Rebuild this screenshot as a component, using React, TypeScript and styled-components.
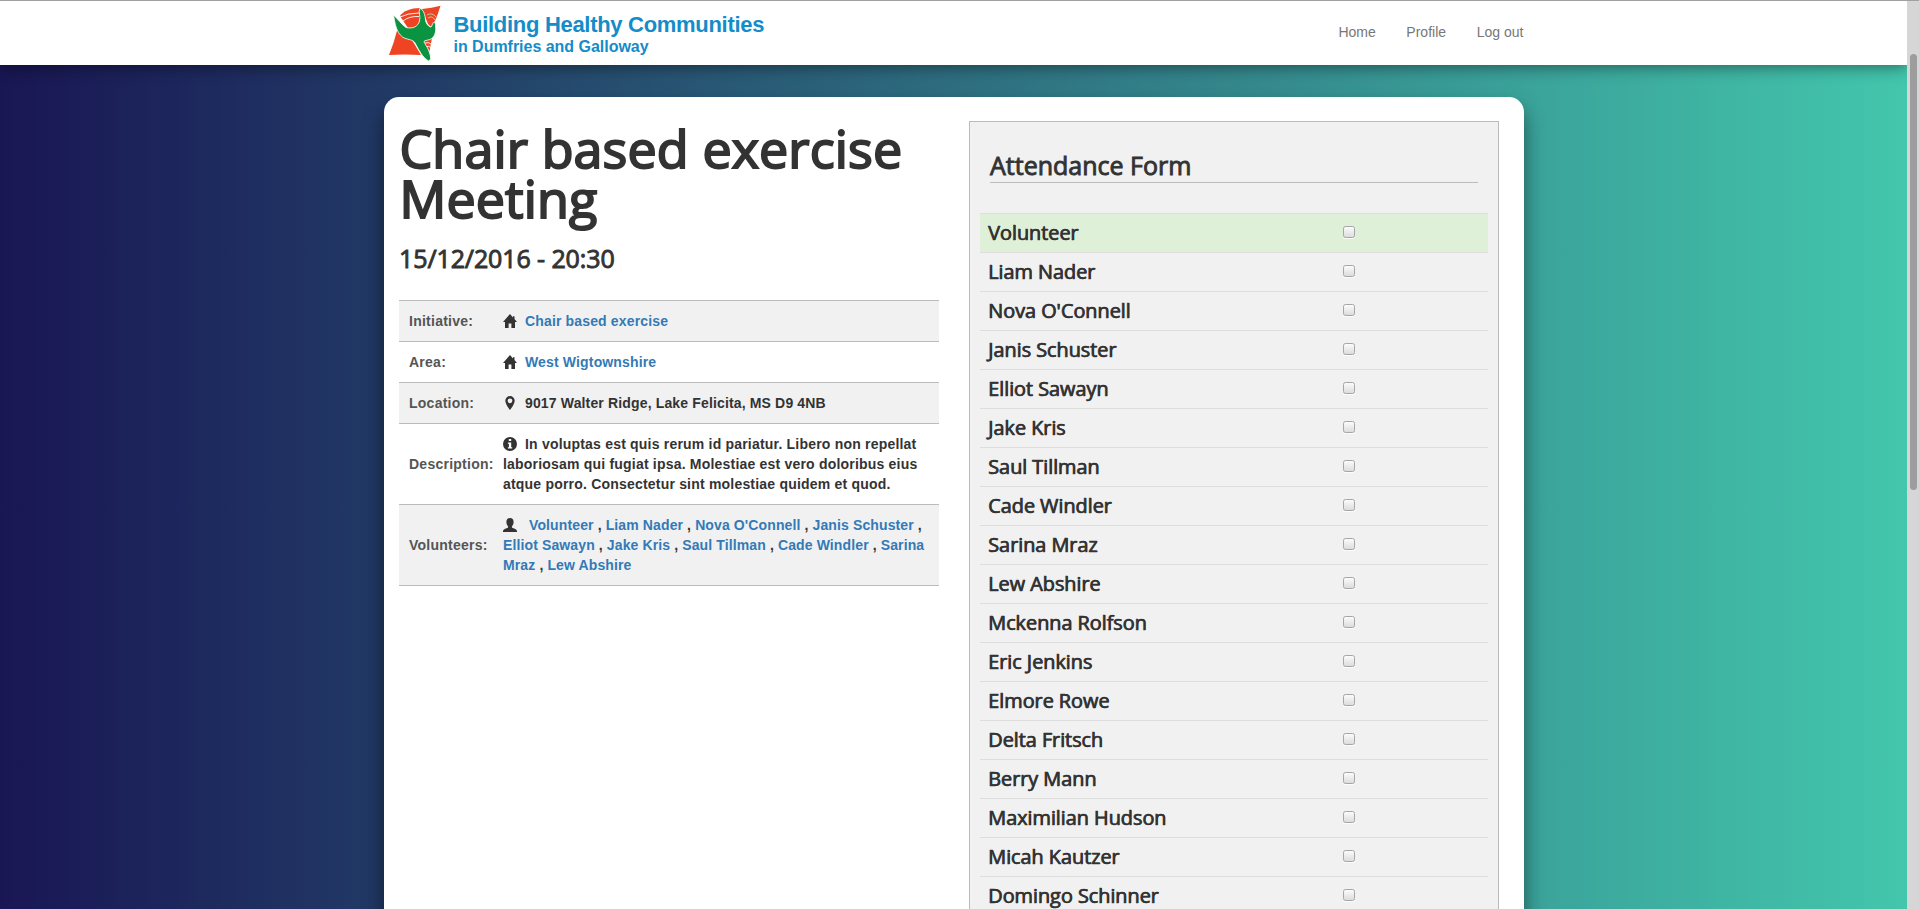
import React from 'react';
import styled, { createGlobalStyle } from 'styled-components';

const sans = '"Liberation Sans", Arial, sans-serif';
const display = '"Open Sans", "Noto Sans", sans-serif';

const GlobalStyle = createGlobalStyle`
  * { box-sizing: border-box; }
  html, body { margin: 0; height: 100%; overflow: hidden; }
  body {
    font-family: ${sans};
    font-size: 14px;
    line-height: 20px;
    color: #333;
  }
  h1, h2, h3, p { margin: 0; }
`;

const Screen = styled.div`
  display: flex;
  width: 1919px;
  height: 909px;
  overflow: hidden;
  border-top: 1px solid #a0a0a0;
`;

const Page = styled.div`
  flex: 1;
  display: flex;
  flex-direction: column;
  overflow: hidden;
  background: linear-gradient(90deg, #191654 0%, #43c6ac 100%);
`;

const ScrollTrack = styled.div`
  width: 12px;
  padding: 53px 2px 0 3px;
  background: #d6d6d6;
`;

const ScrollThumb = styled.div`
  height: 436px;
  border-radius: 4px;
  background: #9d9d9e;
`;

const Header = styled.header`
  position: relative;
  height: 64px;
  flex: none;
  background: #fff;
  box-shadow: 0 2px 15px rgba(0, 0, 0, 0.45);
`;

const HeaderInner = styled.div`
  display: flex;
  justify-content: space-between;
  width: 1140px;
  height: 64px;
  margin: 0 auto;
`;

const Brand = styled.a`
  display: flex;
  gap: 12px;
  padding-left: 4px;
  color: #148cc8;
`;

const BrandText = styled.div`
  padding-top: 11px;
  font-weight: 700;
  white-space: nowrap;
`;

const BrandName = styled.div`
  font-size: 22px;
  line-height: 25px;
  letter-spacing: -0.3px;
`;

const BrandPlace = styled.div`
  font-size: 16px;
  line-height: 20px;
  letter-spacing: -0.02px;
`;

const Nav = styled.nav`
  display: flex;
  gap: 30.5px;
  padding-top: 21px;
  color: #777;
  letter-spacing: 0.02px;
`;

const Card = styled.main`
  display: flex;
  gap: 30px;
  width: 1140px;
  height: 900px;
  flex: none;
  margin: 32px auto 0;
  padding: 24px 25px 0 15px;
  border-radius: 15px;
  background: #fff;
  box-shadow: 0 12px 20px rgba(0, 0, 0, 0.5);
`;

const Details = styled.section`
  width: 540px;
`;

const Title = styled.h1`
  padding: 2px 0 2px 1px;
  font: 400 52px/50px ${display};
  letter-spacing: 0.12px;
  -webkit-text-stroke: 2px #333;
`;

const When = styled.h2`
  margin-top: 20px;
  padding-left: 0.5px;
  font: 400 25px/27px ${display};
  letter-spacing: -0.1px;
  -webkit-text-stroke: 0.9px #333;
`;

const Facts = styled.div`
  margin-top: 28px;
  border-bottom: 1px solid #bbb;
  font-weight: 700;
`;

const Fact = styled.div<{ $shaded?: boolean }>`
  display: grid;
  grid-template-columns: 94px 1fr;
  align-items: center;
  padding: 10px 10px 10px 10.5px;
  border-top: 1px solid #bbb;
  background: ${(p) => (p.$shaded ? '#f1f1f1' : '#fff')};
`;

const Label = styled.div`
  color: #555;
  letter-spacing: 0.25px;
`;

const Value = styled.div<{ $spacing?: number }>`
  white-space: nowrap;
  letter-spacing: ${(p) => p.$spacing ?? 0.15}px;
`;

const Link = styled.a`
  color: #337ab7;
`;

const Glyph = styled.svg`
  width: 14px;
  height: 14px;
  margin-right: 8px;
  vertical-align: -2px;
  fill: #333;
`;

const FormPanel = styled.section`
  width: 530px;
  height: 900px;
  padding: 28px 10px 0;
  border: 1px solid #bbb;
  background: #f1f1f1;
`;

const FormTitle = styled.h2`
  height: 33px;
  margin: 0 10px 30px;
  padding-left: 0.5px;
  border-bottom: 1px solid #bbb;
  font: 400 25px/31px ${display};
  -webkit-text-stroke: 0.9px #333;
`;

const Person = styled.label<{ $active?: boolean }>`
  display: grid;
  grid-template-columns: 353.5px 1fr;
  height: 39px;
  padding-left: 8.5px;
  border-top: 1px solid #ddd;
  background: ${(p) => (p.$active ? '#dff0d8' : 'transparent')};
  font: 400 20px/37px ${display};
  letter-spacing: -0.1px;
  -webkit-text-stroke: 0.45px #333;
  text-shadow: 0.5px 0 0 #333;
`;

const Check = styled.input`
  appearance: none;
  width: 12px;
  height: 12px;
  margin: 12px 0 0 1px;
  border: 1px solid #a6a6a6;
  border-radius: 2.5px;
  background: linear-gradient(#fbfbfb, #dcdcdc);
  box-shadow: 0 1px 0 rgba(255, 255, 255, 0.8);
`;

const Logo = () => (
  <svg width="54" height="64" viewBox="0 0 54 64">
    <g fill="#ee4424">
      <path d="M12 15C15 10 23 7 32 7L33 18L29 26L20 27Z" />
      <path d="M34 8Q44 7 52.500 4.700Q50 13 47 20L43 26L40 23Z" />
      <path d="M9.500 28Q14 38 24 39L33 54Q16 53 1 54Q6 42 9.500 28Z" />
      <path d="M35 41L44 37L41.500 50.500Z" />
    </g>
    <g fill="none" stroke="#fff" strokeWidth="0.9">
      <path d="M12 16Q20 12 31 12M15 20Q21 15 31 15.500" />
      <path d="M37 42Q41 41 43 43M38 46Q41 44 43 47" />
      <path d="M39 14Q44 11 48 16M40 17Q44 14 47 19" stroke="#b9d9b4" />
    </g>
    <path
      fill="#0a9340"
      stroke="#fff"
      strokeWidth="0.8"
      d="M5.500 14C10 18 13 23 18 26.500C24 28 30 26 31.500 20C33 15 30 11 31.800 7.300C36 9 37 14 37.500 19C38 23 41 26 43 26C44.500 25 44 21 47 21C48.500 28 48 35 43 38C40 39.500 36 39 36 41C38 45 42 49 42.800 58L40.500 60C34 56 31 49 27 42C25 38 19 39 14.500 36C8 31 7 22 5.500 14Z"
    />
  </svg>
);

const paths = {
  home: 'M7 0 0 8h2v6h3.600V9.500h2.800V14H12V8h2L11.500 5.100V2.300H10v1.100Z',
  pin: 'M7 0a4.700 4.700 0 0 0-4.700 4.700C2.300 8 7 14 7 14s4.700-6 4.700-9.300A4.700 4.700 0 0 0 7 0Zm0 7.200a2.400 2.400 0 1 1 0-4.800 2.400 2.400 0 0 1 0 4.800Z',
  info: 'M7 0a7 7 0 1 0 0 14A7 7 0 0 0 7 0ZM5.800 2h2.400v2.100H5.800Zm3.400 9.500H4.900v-1.200h1V6.700h-1V5.500h3.300v4.800h1Z',
  user: 'M7 0C4.700 0 3.400 1.600 3.400 4c0 2 .8 3.500 1.700 4.400v1.200C3.500 10.400.3 11.300 0 12.800V14h14v-1.200c-.3-1.500-3.500-2.400-5.100-3.200V8.400c.9-.9 1.700-2.400 1.700-4.400C10.600 1.600 9.300 0 7 0Z',
};

const Icon = ({ name }: { name: keyof typeof paths }) => (
  <Glyph viewBox="0 0 14 14">
    <path fillRule="evenodd" d={paths[name]} />
  </Glyph>
);

const volunteerLines = [
  ['Volunteer', 'Liam Nader', "Nova O'Connell", 'Janis Schuster'],
  ['Elliot Sawayn', 'Jake Kris', 'Saul Tillman', 'Cade Windler'],
];

const people = [
  'Volunteer', 'Liam Nader', "Nova O'Connell", 'Janis Schuster', 'Elliot Sawayn', 'Jake Kris',
  'Saul Tillman', 'Cade Windler', 'Sarina Mraz', 'Lew Abshire', 'Mckenna Rolfson', 'Eric Jenkins',
  'Elmore Rowe', 'Delta Fritsch', 'Berry Mann', 'Maximilian Hudson', 'Micah Kautzer', 'Domingo Schinner',
];

const Names = ({ list }: { list: string[] }) => (
  <>
    {list.map((n) => (
      <React.Fragment key={n}>
        <Link>{n}</Link>{' , '}
      </React.Fragment>
    ))}
  </>
);

export default function App() {
  return (
    <Screen>
      <GlobalStyle />
      <Page>
        <Header>
          <HeaderInner>
            <Brand>
              <Logo />
              <BrandText>
                <BrandName>Building Healthy Communities</BrandName>
                <BrandPlace>in Dumfries and Galloway</BrandPlace>
              </BrandText>
            </Brand>
            <Nav>
              <span>Home</span>
              <span>Profile</span>
              <span>Log out</span>
            </Nav>
          </HeaderInner>
        </Header>
        <Card>
          <Details>
            <Title>Chair based exercise Meeting</Title>
            <When>15/12/2016 - 20:30</When>
            <Facts>
              <Fact $shaded>
                <Label>Initiative:</Label>
                <Value><Icon name="home" /><Link>Chair based exercise</Link></Value>
              </Fact>
              <Fact>
                <Label>Area:</Label>
                <Value><Icon name="home" /><Link>West Wigtownshire</Link></Value>
              </Fact>
              <Fact $shaded>
                <Label>Location:</Label>
                <Value><Icon name="pin" />9017 Walter Ridge, Lake Felicita, MS D9 4NB</Value>
              </Fact>
              <Fact>
                <Label>Description:</Label>
                <Value $spacing={0.2}>
                  <Icon name="info" />In voluptas est quis rerum id pariatur. Libero non repellat<br />
                  laboriosam qui fugiat ipsa. Molestiae est vero doloribus eius<br />
                  atque porro. Consectetur sint molestiae quidem et quod.
                </Value>
              </Fact>
              <Fact $shaded>
                <Label>Volunteers:</Label>
                <Value $spacing={0.12}>
                  <Icon name="user" />&nbsp;<Names list={volunteerLines[0]} /><br />
                  <Names list={volunteerLines[1]} /><Link>Sarina<br />Mraz</Link> , <Link>Lew Abshire</Link>
                </Value>
              </Fact>
            </Facts>
          </Details>
          <FormPanel>
            <FormTitle>Attendance Form</FormTitle>
            {people.map((name, i) => (
              <Person key={name} $active={i === 0}>
                <span>{name}</span>
                <Check type="checkbox" />
              </Person>
            ))}
          </FormPanel>
        </Card>
      </Page>
      <ScrollTrack>
        <ScrollThumb />
      </ScrollTrack>
    </Screen>
  );
}
